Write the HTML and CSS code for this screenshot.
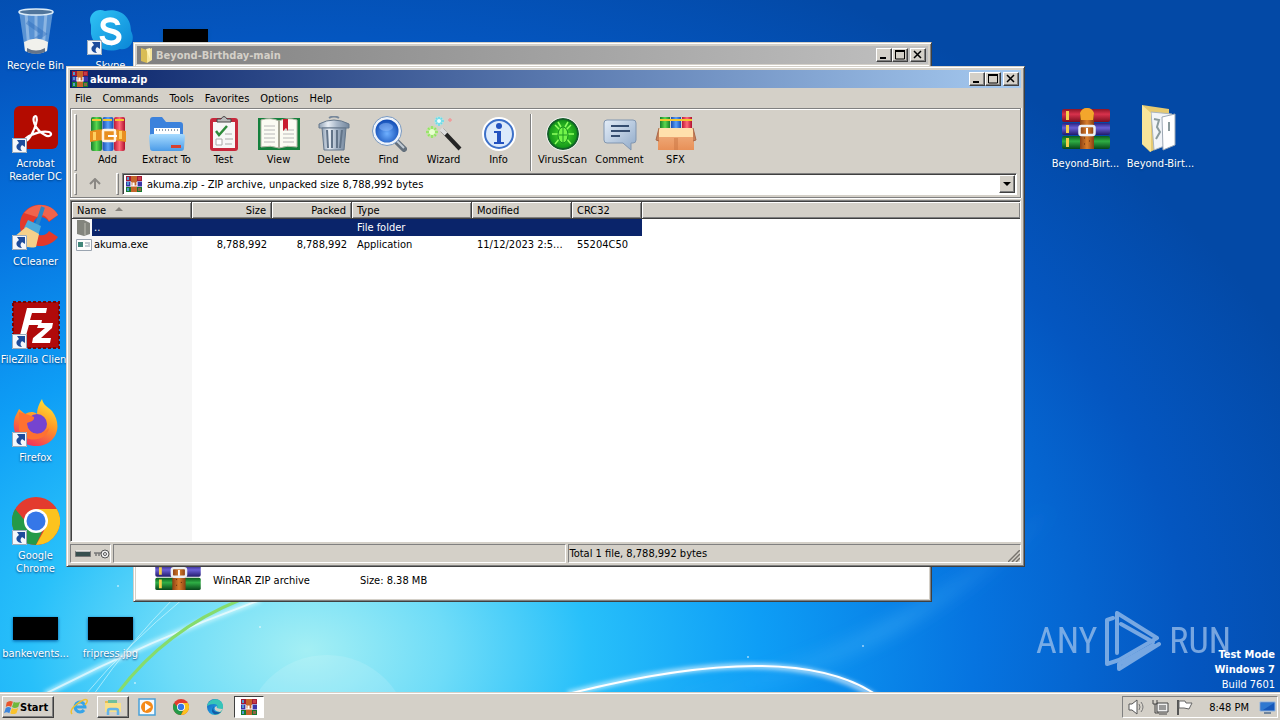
FILE: index.html
```html
<!DOCTYPE html>
<html lang="en">
<head>
<meta charset="utf-8">
<title>akuma.zip</title>
<link rel="stylesheet" href="styles.css">
</head>
<body>
<svg class="sprite" aria-hidden="true">
  <defs>
    <linearGradient id="gRed" x2="0" y2="1"><stop stop-color="#8d1527"/><stop offset=".4" stop-color="#d8324c"/><stop offset="1" stop-color="#7b0f20"/></linearGradient>
    <linearGradient id="gPurple" x2="0" y2="1"><stop stop-color="#2b2380"/><stop offset=".4" stop-color="#6a5fd6"/><stop offset="1" stop-color="#221b6c"/></linearGradient>
    <linearGradient id="gGreen" x2="0" y2="1"><stop stop-color="#0b5a1c"/><stop offset=".4" stop-color="#2fae45"/><stop offset="1" stop-color="#07461a"/></linearGradient>
    <linearGradient id="gStrap"><stop stop-color="#8a3f12"/><stop offset=".5" stop-color="#d97f2c"/><stop offset="1" stop-color="#8a3f12"/></linearGradient>
    <linearGradient id="vGreen"><stop stop-color="#17802a"/><stop offset=".5" stop-color="#5ad84f"/><stop offset="1" stop-color="#17802a"/></linearGradient>
    <linearGradient id="vBlue"><stop stop-color="#1a4fb4"/><stop offset=".5" stop-color="#5aa0f8"/><stop offset="1" stop-color="#1a4fb4"/></linearGradient>
    <linearGradient id="vRed"><stop stop-color="#c01838"/><stop offset=".5" stop-color="#ff6a78"/><stop offset="1" stop-color="#b01030"/></linearGradient>
    <linearGradient id="folderBlue" x2="0" y2="1"><stop stop-color="#a9dcff"/><stop offset="1" stop-color="#4a9be8"/></linearGradient>
    <linearGradient id="bin"><stop stop-color="#8fa0b4"/><stop offset=".3" stop-color="#e8eef5"/><stop offset=".6" stop-color="#a7b6c8"/><stop offset="1" stop-color="#74879d"/></linearGradient>
    <radialGradient id="lens" cx=".5" cy=".6"><stop stop-color="#6fb0ff"/><stop offset="1" stop-color="#1550b8"/></radialGradient>
    <radialGradient id="virus"><stop stop-color="#4be22c"/><stop offset="1" stop-color="#0f8f18"/></radialGradient>
    <linearGradient id="skype" x2="1" y2="1"><stop stop-color="#2fc4f5"/><stop offset="1" stop-color="#0a84d6"/></linearGradient>
    <linearGradient id="fox" x1=".8" y1="0" x2=".3" y2="1"><stop stop-color="#ffe838"/><stop offset=".45" stop-color="#ff9a26"/><stop offset="1" stop-color="#f02a60"/></linearGradient>
    <linearGradient id="edge" x2="1" y2="1"><stop stop-color="#1b57b8"/><stop offset=".6" stop-color="#1c9de0"/><stop offset="1" stop-color="#40c878"/></linearGradient>
    <linearGradient id="box" x2="0" y2="1"><stop stop-color="#f0b080"/><stop offset="1" stop-color="#e89058"/></linearGradient>
    <linearGradient id="bubble" x2="1" y2="1"><stop stop-color="#e4edf8"/><stop offset="1" stop-color="#8fa9c8"/></linearGradient>
  </defs>
  <symbol id="rar" viewBox="0 0 48 42">
    <rect y="1" width="48" height="13" rx="2" fill="url(#gRed)"/><rect y="15" width="48" height="12" rx="2" fill="url(#gPurple)"/><rect y="28" width="48" height="13" rx="2" fill="url(#gGreen)"/>
    <path d="M4 3h3v9H4zM4 17h3v8H4zM4 30h3v9H4z" fill="#f3d04a"/>
    <path d="M18 8q0-8 7-8t7 8v33H18z" fill="url(#gStrap)"/>
    <path d="M18 5q2-5 7-5t7 5l-1 7H19z" fill="#f3a62c"/>
    <rect x="17.500" y="18" width="15" height="9" rx="2" fill="none" stroke="#eceff2" stroke-width="2.500"/><path d="M25 20v6" stroke="#fff" stroke-width="2"/>
    <path d="M22 30h1M27 33h1M22 36h1" stroke="#5b270a"/>
  </symbol>
  <symbol id="rarsmall" viewBox="0 0 16 16">
    <path d="M0 0h16v5H0z" fill="#a31a35"/><path d="M0 5.500h16v5H0z" fill="#3b34a6"/><path d="M0 11h16v5H0z" fill="#167a2d"/>
    <path d="M1 1h2v3H1zM1 6h2v3H1zM1 12h2v3H1z" fill="#4f9ad0"/><path d="M5 0h6v16H5z" fill="#c4642a"/><path d="M5 6v4h2V7h1v3h3V6" fill="none" stroke="#fff" stroke-width="1.200"/><path d="M12 1h3v3h-3zM12 12h3v3h-3z" fill="#e05555" fill-opacity=".6"/>
  </symbol>
  <symbol id="arrow" viewBox="0 0 15 15"><path d="M0 0h15v15H0z" fill="#f4f7fb"/><path d="M.5 .5h14v14H.5z" fill="none" stroke="#9ab"/><path d="M5 2h8v7l-3-2c-2 2-2 4 0 6-5 0-8-5-3-8z" fill="#1d4c9c"/></symbol>
  <symbol id="chrome" viewBox="0 0 48 48"><circle cx="24" cy="24" r="24" fill="#e33b2e"/><path d="M3.200 12A24 24 0 0 0 24 48l9-20-19-3z" fill="#249a48"/><path d="M24 12h20.800A24 24 0 0 1 24 48l10-18z" fill="#fcc31e"/><circle cx="24" cy="24" r="12" fill="#fff"/><circle cx="24" cy="24" r="9.500" fill="#3577e8"/></symbol>
  <symbol id="folder" viewBox="0 0 16 16"><path d="M2 1l6 2v13l-6-2z" fill="#d9bd55"/><path d="M8 3l5-2v12l-5 3z" fill="#f7e69a"/><path d="M7 2l4-1v11" fill="#fff4b8"/></symbol>
</svg>

<main class="desktop">
  <svg class="wallpaper" viewBox="0 0 1280 692" preserveAspectRatio="none" aria-hidden="true">
    <defs>
      <filter id="soft" x="-20%" y="-20%" width="140%" height="140%"><feGaussianBlur stdDeviation="2"/></filter>
      <filter id="wide" x="-30%" y="-30%" width="160%" height="160%"><feGaussianBlur stdDeviation="8"/></filter>
      <linearGradient id="beam" gradientUnits="userSpaceOnUse" x1="700" y1="690" x2="1060" y2="520"><stop stop-color="#65c8ff" stop-opacity=".05"/><stop offset=".5" stop-color="#65c8ff" stop-opacity=".3"/><stop offset="1" stop-color="#65c8ff" stop-opacity="0"/></linearGradient>
    </defs>
    <path d="M680 700Q900 660 1060 500" fill="none" stroke="url(#beam)" stroke-width="14" filter="url(#wide)"/>
    <circle cx="327" cy="738" r="83" fill="#fff" fill-opacity=".12"/>
    <path d="M45 694Q150 640 260 600" fill="none" stroke="#e8ffff" stroke-opacity=".7" stroke-width="5" filter="url(#soft)"/>
    <path d="M45 694Q150 640 260 600" fill="none" stroke="#fff" stroke-opacity=".6" stroke-width="2"/>
    <path d="M86 694Q127 645 184 598M94 694Q130 642 174 598" fill="none" stroke="#dffcff" stroke-opacity=".6"/>
    <path d="M117 694Q165 630 240 600" fill="none" stroke="#86dc6c" stroke-width="3"/>
    <path d="M568 694Q790 635 880 700" fill="none" stroke="#fff" stroke-opacity=".6" stroke-width="6" filter="url(#soft)"/>
    <path d="M568 694Q790 638 875 694" fill="none" stroke="#fff" stroke-width="2"/>
    <g fill="#fff" fill-opacity=".6"><circle cx="135" cy="683" r="1"/><circle cx="118" cy="586" r="1"/><circle cx="748" cy="657" r="1"/><circle cx="863" cy="646" r="1"/><circle cx="260" cy="627" r="1"/></g>
  </svg>

  <div class="icons">
    <figure class="item c1 r1"><svg viewBox="0 0 48 48"><path d="M7 4l6 40q11 6 22 0l6-40z" fill="#9fc6ea" fill-opacity=".55"/><path d="M14 6l3 37M24 7v38M34 6l-3 37" stroke="#eaf6ff" stroke-opacity=".35" stroke-width="3"/><path d="M15 15l17 12-14 9" fill="none" stroke="#2a6ab8" stroke-opacity=".4" stroke-width="4"/><path d="M12 35q12-7 24 0l-1 9q-11 5-22 0z" fill="#f1f1ec"/><path d="M15 41q9 5 18 0v4q-9 4-18 0z" fill="#64748a"/><ellipse cx="24" cy="5" rx="17" ry="3" fill="#50759b" stroke="#dcecf8" stroke-width="1.500"/></svg><figcaption>Recycle Bin</figcaption></figure>
    <figure class="item c2 r1"><svg viewBox="0 0 48 48"><path d="M4 18C0 8 9 0 18 4c12-3 26 3 26 20 5 9-1 20-11 18C20 47 6 40 4 27z" fill="url(#skype)"/><path d="M31 18c-1-7-15-7-15 0 0 8 16 4 16 12 0 8-16 8-17-1" fill="none" stroke="#fff" stroke-width="5"/><use href="#arrow" y="33" width="15" height="15"/></svg><figcaption>Skype</figcaption></figure>
    <figure class="item thumb c3 r1"><span></span></figure>
    <figure class="item c1 r2"><svg viewBox="0 0 48 48"><rect x="2" y="1" width="44" height="43" rx="6" fill="#b30b00"/><path d="M13 36c-3-3 14-11 24-9 5 2 0 6-4 3-8-4-13-13-11-18 2-3 4 1 2 7-2 7-7 17-11 17z" fill="none" stroke="#fff" stroke-width="2.200"/><use href="#arrow" y="33" width="15" height="15"/></svg><figcaption>Acrobat<br>Reader DC</figcaption></figure>
    <figure class="item c1 r3"><svg viewBox="0 0 48 48"><path d="M46 12C36-5 8 0 8 22c0 22 26 28 38 12l-9-6c-5 8-16 4-16-5 0-10 11-12 16-4z" fill="#e3392a"/><path d="M12 10C22-2 40 0 46 12l-9 6c-3-6-8-7-12-4z" fill="#f0644c"/><path d="M31 4l-6 18" stroke="#2b86c6" stroke-width="4"/><path d="M16 17l13 6-3 10-14-8z" fill="#4aa9dc"/><path d="M14 24l13 7-3 13q-12 3-22-10z" fill="#f5d08a"/><use href="#arrow" y="32" width="15" height="15"/></svg><figcaption>CCleaner</figcaption></figure>
    <figure class="item c1 r4"><svg viewBox="0 0 48 48"><path d="M1 1h46v46H1z" fill="#b00a0a" stroke="#730505" stroke-width="2" stroke-dasharray="3 2"/><path d="M15 7h20l-1 5H20l-2 7h12l-1 5H17l-4 14H7zM27 22h14l-1 5-11 10h10l-1 5H20l1-5 12-10h-8z" fill="#fff"/><use href="#arrow" y="33" width="15" height="15"/></svg><figcaption class="nowrap">FileZilla Client</figcaption></figure>
    <figure class="item c1 r5"><svg viewBox="0 0 48 48"><path d="M30 0c1 6 6 8 10 12 12 16 3 35-16 35C8 47-2 33 3 18l4-8 6 5c4-2 8-3 12 0 0-6 2-10 5-15z" fill="url(#fox)"/><circle cx="25" cy="25" r="10" fill="#7544d0"/><path d="M7 13c7 2 10 3 15 5 1 4-5 5-7 6 0 11 13 15 22 5-2 14-25 16-30 2" fill="#ff7130"/><use href="#arrow" y="33" width="15" height="15"/></svg><figcaption>Firefox</figcaption></figure>
    <figure class="item c1 r6"><svg viewBox="0 0 48 48"><use href="#chrome" width="48" height="48"/><use href="#arrow" y="33" width="15" height="15"/></svg><figcaption>Google<br>Chrome</figcaption></figure>
    <figure class="item thumb c1 r7"><span></span><figcaption>bankevents...</figcaption></figure>
    <figure class="item thumb c2 r7"><span></span><figcaption>fripress.jpg</figcaption></figure>
    <figure class="item c15 r2"><svg viewBox="0 0 48 48"><use href="#rar" y="3" width="48" height="42"/></svg><figcaption>Beyond-Birt...</figcaption></figure>
    <figure class="item c16 r2"><svg viewBox="0 0 48 48"><path d="M5 0l27 4v34l-19 9-8-8z" fill="#e6ca70"/><path d="M14 7l21 2v29l-18 7z" fill="#f2f5f8" stroke="#aab4bd"/><path d="M25 12l13-3v31l-12 5z" fill="#fff" stroke="#9da8b4"/><path d="M17 14l5 1-2 7 3 5-4 7M32 17v9" fill="none" stroke="#8a9a9c" stroke-width="2"/><path d="M5 0l9 8v39l-9-8z" fill="#f8e59a"/></svg><figcaption>Beyond-Birt...</figcaption></figure>
  </div>

  <div class="brand" aria-label="ANY RUN"><span>ANY</span><svg viewBox="0 0 56 62"><g fill="none" stroke="currentColor" stroke-width="4" stroke-linejoin="round" stroke-linecap="round"><path d="M8 8L2 10v44l12-4 38-22L12 3v40"/><path d="M16 14l32 18M48 35L14 54v5l40-25"/></g></svg><span>RUN</span></div>
  <div class="build"><b>Test Mode</b><b>Windows 7</b><span>Build 7601</span></div>

  <section class="window back">
    <header class="titlebar idle"><svg viewBox="0 0 16 16"><use href="#folder"/></svg><h2>Beyond-Birthday-main</h2>
      <button aria-label="Minimize"><svg viewBox="0 0 12 10"><path d="M2 8h6" stroke="#000" stroke-width="2"/></svg></button><button aria-label="Maximize"><svg viewBox="0 0 12 10"><path d="M1.500 1v8h9V1M1 1h10" fill="none" stroke="#000"/><path d="M1 1h10" stroke="#000" stroke-width="2"/></svg></button><button class="close" aria-label="Close"><svg viewBox="0 0 12 10"><path d="M2 1l7 7M9 1L2 8" stroke="#000" stroke-width="1.500"/></svg></button></header>
    <div class="details"><svg viewBox="0 0 48 42"><use href="#rar"/></svg><p>WinRAR ZIP archive</p><p>Size: 8.38 MB</p></div>
  </section>

  <section class="window front">
    <header class="titlebar"><svg viewBox="0 0 16 16"><use href="#rarsmall"/></svg><h1>akuma.zip</h1>
      <button aria-label="Minimize"><svg viewBox="0 0 12 10"><path d="M2 8h6" stroke="#000" stroke-width="2"/></svg></button><button aria-label="Maximize"><svg viewBox="0 0 12 10"><path d="M1.500 1v8h9V1M1 1h10" fill="none" stroke="#000"/><path d="M1 1h10" stroke="#000" stroke-width="2"/></svg></button><button class="close" aria-label="Close"><svg viewBox="0 0 12 10"><path d="M2 1l7 7M9 1L2 8" stroke="#000" stroke-width="1.500"/></svg></button></header>
    <nav class="menu"><button>File</button><button>Commands</button><button>Tools</button><button>Favorites</button><button>Options</button><button>Help</button></nav>
    <div class="bars">
      <div class="toolbar"><i class="grip"></i>
        <button class="wide"><svg viewBox="0 0 36 36"><rect x="1" y="1" width="11" height="34" rx="2" fill="url(#vGreen)"/><rect x="12.500" y="1" width="11" height="34" rx="2" fill="url(#vBlue)"/><rect x="24" y="1" width="11" height="34" rx="2" fill="url(#vRed)"/><path d="M2 4h9M13 4h9M25 4h9" stroke="#f4c630" stroke-width="2"/><path d="M0 15q18-4 36 0v11q-18-4-36 0z" fill="#e88f20"/><path d="M3 16h3v8H3zM29 15h3v8h-3z" fill="#ffd060"/><rect x="13" y="14" width="12" height="11" rx="1" fill="none" stroke="#fff3e0" stroke-width="2.500"/><path d="M18 20h9" stroke="#fff" stroke-width="2"/></svg>Add</button>
        <button class="wide"><svg viewBox="0 0 36 36"><path d="M1 4q0-3 3-3h9l4 5h14q3 0 3 3v20H1z" fill="#3c82dc"/><path d="M5 12h26v9H5z" fill="#fff"/><path d="M7 14h22" stroke="#90a0b0" stroke-width="2" stroke-dasharray="1 2"/><path d="M0 20q0-2 3-2h30q3 0 3 2l-1 12q0 3-3 3H4q-3 0-3-3z" fill="url(#folderBlue)"/><path d="M22 29h10v3H22z" fill="#d84030"/></svg>Extract To</button>
        <button><svg viewBox="0 0 36 36"><rect x="4" y="2" width="28" height="33" rx="3" fill="#c8283c"/><path d="M7 6h22v26H7z" fill="#f7f7f7"/><path d="M11 6V3h4q3-5 6 0h4v3z" fill="#bbb" stroke="#444"/><path d="M10 15l3 4 8-9" fill="none" stroke="#2e8b3c" stroke-width="2.500"/><path d="M19 18h7M19 23h8M19 28h7" stroke="#aaa"/><path d="M10 23h6v6h-6z" fill="#fff" stroke="#aaa"/></svg>Test</button>
        <button><svg class="book" viewBox="0 0 42 36"><path d="M0 2h42v32H0z" fill="#14803c"/><path d="M3 4q10-3 18 1 8-4 18-1v27q-10-2-18 1-8-3-18-1z" fill="#fbfbf3" stroke="#b8b8a8"/><path d="M21 5v27" stroke="#a8a898" stroke-width="2"/><path d="M6 10h11M6 14h11M6 18h11M6 22h11M6 26h11M25 14h11M25 18h11M25 22h11M25 26h11" stroke="#b8b8b8"/><path d="M25 3h5v12l-2-3-3 3z" fill="#c81e30"/></svg>View</button>
        <button><svg viewBox="0 0 36 36"><path d="M13 2q5-3 10 0" fill="none" stroke="#77879a" stroke-width="2"/><path d="M3 8q15-8 30 0v4H3z" fill="url(#bin)" stroke="#66788c"/><path d="M6 12h24l-2 22H8z" fill="url(#bin)" stroke="#65778b"/><path d="M11 14l1 18M16 14v18M21 14v18M26 14l-2 18" stroke="#627489" stroke-width="2"/></svg>Delete</button>
        <button><svg viewBox="0 0 36 36"><path d="M24 24l9 9" stroke="#64707c" stroke-width="6" stroke-linecap="round"/><path d="M25 24l8 8" stroke="#c2ccd6" stroke-width="2"/><circle cx="16" cy="15" r="13" fill="url(#lens)" stroke="#eef3fa" stroke-width="3"/><circle cx="16" cy="15" r="14.500" fill="none" stroke="#7898c0"/><ellipse cx="15" cy="11" rx="7" ry="4" fill="#9cc4ff" fill-opacity=".45"/></svg>Find</button>
        <button><svg viewBox="0 0 36 36"><path d="M16 14l18 19" stroke="#252525" stroke-width="4"/><path d="M15 13l5 5" stroke="#ddd" stroke-width="4"/><circle cx="6" cy="16" r="6" fill="#b4ee80" fill-opacity=".5"/><circle cx="13" cy="5" r="5" fill="#a0eef0" fill-opacity=".5"/><g stroke-width="1.500"><path d="M6 10v12M0 16h12M2 12l8 8M10 12l-8 8" stroke="#8ae85a"/><path d="M13 1v9M9 5h9M10 2l6 6M16 2l-6 6" stroke="#64dcec"/><path d="M24 2v4M22 4h4" stroke="#f09a9a"/></g><circle cx="6" cy="16" r="3" fill="#e8ffd0"/><circle cx="13" cy="5" r="2" fill="#f0ffff"/></svg>Wizard</button>
        <button><svg viewBox="0 0 36 36"><circle cx="18" cy="18" r="16" fill="#edf3fb" stroke="#fff" stroke-width="2"/><circle cx="18" cy="18" r="14" fill="#dceafb" stroke="#3d70c8" stroke-width="2"/><circle cx="18" cy="10" r="3" fill="#2352c0"/><path d="M13 15h7v11h3v2H13v-2h3v-9h-3z" fill="#2352c0"/></svg>Info</button>
        <i class="sep"></i>
        <button class="mid"><svg viewBox="0 0 36 36"><circle cx="18" cy="18" r="15" fill="url(#virus)" stroke="#14602a" stroke-width="2"/><circle cx="18" cy="18" r="16.500" fill="none" stroke="#eee"/><path d="M10 9l5 5M26 9l-5 5M7 18h22M10 28l5-6M26 28l-5-6M13 6l3 5M23 6l-3 5" stroke="#8fff60" stroke-width="1.500"/><ellipse cx="18" cy="19" rx="5" ry="8" fill="#74f44a" stroke="#118a1d"/><path d="M18 12v15M14 19h8" stroke="#1d9a20"/></svg>VirusScan</button>
        <button class="mid"><svg viewBox="0 0 36 36"><path d="M5 4h26q3 0 3 3v17q0 3-3 3h-2v7l-8-7H5q-3 0-3-3V7q0-3 3-3z" fill="url(#bubble)" stroke="#8196b0"/><path d="M9 10h18M9 15h19M9 20h9" stroke="#354d70" stroke-width="2"/></svg>Comment</button>
        <button><svg class="book" viewBox="0 0 40 36"><path d="M4 1h10v15H4z" fill="url(#vGreen)"/><path d="M15 1h10v15H15z" fill="url(#vBlue)"/><path d="M26 1h10v15H26z" fill="url(#vRed)"/><path d="M4 4h32" stroke="#f4c630" stroke-width="2"/><path d="M2 15h36v19H2z" fill="url(#box)"/><path d="M3 12h34l1 9H3z" fill="#ffe0ac"/><path d="M3 12l-3 12 3 1M37 12l3 12-3 1" fill="#c88058" stroke="#aa6848"/><path d="M20 22v12" stroke="#c97544" stroke-width="4" stroke-opacity=".5"/></svg>SFX</button>
      </div>
      <div class="address"><i class="grip"></i><button class="up" aria-label="Up one level"><svg viewBox="0 0 12 12"><path d="M6 11V2M1 6l5-5 5 5" fill="none" stroke="#8a8783" stroke-width="2"/></svg></button><i class="grip"></i>
        <div class="combo"><svg viewBox="0 0 16 16"><use href="#rarsmall"/></svg><select aria-label="Archive path"><option>akuma.zip - ZIP archive, unpacked size 8,788,992 bytes</option></select><span class="drop"></span></div></div>
    </div>
    <div class="list">
      <table>
        <colgroup><col class="w120"><col class="w80"><col class="w80"><col class="w120"><col class="w100"><col class="w70"><col></colgroup>
        <thead><tr><th>Name <svg class="sort" viewBox="0 0 8 4"><path d="M0 4l4-4 4 4z" fill="#85827d"/></svg></th><th class="num">Size</th><th class="num">Packed</th><th>Type</th><th>Modified</th><th>CRC32</th><th class="rest"></th></tr></thead>
        <tbody>
          <tr class="selected"><td class="name"><svg viewBox="0 0 16 16"><path d="M0 0h16v16H0z" fill="#f6f6f6"/><path d="M1 0h7l6 3v11l-6 2-7-2z" fill="#83857d"/><path d="M9 3v12" stroke="#a0a198" stroke-width="2"/></svg><span>..</span></td><td></td><td></td><td>File folder</td><td></td><td></td><td class="rest"></td></tr>
          <tr><td class="name"><svg viewBox="0 0 16 16"><path d="M.5 2.500h15v11H.5z" fill="#fdfdfd" stroke="#9aa4b0"/><path d="M2 5h5v5H2z" fill="#41877a"/><path d="M9 6h3M9 9h3M13 5v5" stroke="#8797a5"/></svg><span>akuma.exe</span></td><td class="num">8,788,992</td><td class="num">8,788,992</td><td>Application</td><td>11/12/2023 2:5...</td><td>55204C50</td><td class="rest"></td></tr>
        </tbody>
      </table>
    </div>
    <footer class="status"><div class="lights"><svg viewBox="0 0 16 8"><path d="M.5 1.500h15v5H.5z" fill="#385050" stroke="#777"/><path d="M1 1h14" stroke="#fff"/></svg><svg class="key" viewBox="0 0 16 10"><path d="M0 4h8M2 4v3M5 4v3" stroke="#777" stroke-width="1.500"/><circle cx="11" cy="5" r="4" fill="#eee" stroke="#555"/><circle cx="11" cy="5" r="1.500" fill="#fff" stroke="#555"/></svg></div><div class="cell"></div><div class="cell total">Total 1 file, 8,788,992 bytes<svg viewBox="0 0 12 12"><path d="M0 12L12 0M4 12l8-8M8 12l4-4" stroke="#77736d" stroke-width="1.500"/></svg></div></footer>
  </section>
</main>

<footer class="taskbar">
  <button class="start"><svg viewBox="0 0 18 18"><path d="M3 4q3-3 7-1L8 9Q5 7 2 9z" fill="#e8552c"/><path d="M11 3q3 2 7 0l-2 6q-4 2-7 0z" fill="#6fb83c"/><path d="M2 10q3-2 6 0l-2 6q-3-2-6 0z" fill="#3c86dc"/><path d="M9 10q3 2 7 0l-2 6q-4 2-7 0z" fill="#f8c22c"/></svg>Start</button>
  <button class="task" aria-label="Internet Explorer"><svg viewBox="0 0 18 18"><path d="M14 12a5 5 0 1 1 1-3H5" fill="none" stroke="#36a4e8" stroke-width="3"/><path d="M2 16Q-1 12 7 6T17 2q1 2-2 5" fill="none" stroke="#f0c02c" stroke-width="1.500"/></svg></button>
  <button class="task open" aria-label="Explorer"><svg viewBox="0 0 18 18"><path d="M1 3h6l1 2h9v9H1z" fill="#e8bd50"/><path d="M4 2h9v5H4z" fill="#70c09a"/><path d="M1 5h16v9H1z" fill="#f8e08a"/><path d="M4 17v-4q0-2 2-2h6q2 0 2 2v4" fill="none" stroke="#64b4e8" stroke-width="2.500"/></svg></button>
  <button class="task" aria-label="Media Player"><svg viewBox="0 0 18 18"><path d="M1 1h16v16H1z" fill="#f5fbff" stroke="#48a0d8" stroke-width="1.500"/><circle cx="9" cy="9" r="6" fill="#f58a18"/><path d="M7 5l6 4-6 4z" fill="#fff"/></svg></button>
  <button class="task" aria-label="Chrome"><svg viewBox="0 0 18 18"><use href="#chrome" x="1" y="1" width="16" height="16"/></svg></button>
  <button class="task" aria-label="Edge"><svg viewBox="0 0 18 18"><circle cx="9" cy="9" r="8" fill="url(#edge)"/><path d="M1 8C3-1 16-1 17 8q0 4-6 3 2-5-3-5-4 0-7 2z" fill="#37c5b8"/><path d="M8 8q-3 7 7 6-3 3-7 2-4-3 0-8z" fill="#155ca8"/><path d="M11 8q-2 3 6 3l-3 3q-7-1-5-5z" fill="#d4d0c8"/></svg></button>
  <button class="task active" aria-label="WinRAR"><svg viewBox="0 0 16 16"><use href="#rarsmall"/></svg></button>
  <div class="tray">
    <svg viewBox="0 0 18 16"><path d="M1 5h3l5-4v14l-5-4H1z" fill="#fff" stroke="#555"/><path d="M11 5q2 3 0 6M13 3q4 5 0 10" fill="none" stroke="#777"/></svg>
    <svg viewBox="0 0 18 16"><path d="M5 4h11v9H5z" fill="#eee" stroke="#444"/><path d="M7 6h7v5H7z" fill="#999"/><path d="M7 15h8M1 1v4h4V1M3 5v9h4" fill="none" stroke="#444"/></svg>
    <svg viewBox="0 0 18 16"><path d="M2 1v15" stroke="#555" stroke-width="2"/><path d="M3 2h6l1 2h6l-3 6-5-1H3z" fill="#fff" stroke="#666"/></svg>
    <time>8:48 PM</time>
    <svg viewBox="0 0 18 16"><path d="M1 3h15v9H1z" fill="#1658ba" stroke="#8fb4e0"/><path d="M2 4h13L4 11H2z" fill="#2f78d0"/><path d="M5 14h7" stroke="#71859c" stroke-width="2"/></svg>
  </div>
</footer>
</body>
</html>
```
FILE: styles.css
```css
* { box-sizing: border-box; }
html, body { height: 100%; margin: 0; }
body { display: flex; flex-direction: column; overflow: hidden; font: 11px/13px "DejaVu Sans Condensed", "DejaVu Sans", sans-serif; color: #000; }
button, select { font: inherit; color: inherit; margin: 0; padding: 0; border: 0; background: none; }
h1, h2, p, figure { margin: 0; font: inherit; }
svg { display: block; flex: none; }
.sprite { position: absolute; width: 0; height: 0; }

.desktop {
  position: relative; flex: 1; min-height: 0; overflow: hidden;
  background: radial-gradient(ellipse 84% 108% at 24% 94%, #a4eff4 0%, #6edcf8 13%, #28c0fa 26%, #0e9ef6 42%, #0674e0 62%, #0456c0 82%, #0349a6 100%);
}
.wallpaper { position: absolute; inset: 0; width: 100%; height: 100%; }

.icons { position: relative; display: grid; grid-template-columns: repeat(16, 75px); grid-auto-rows: 98px; margin-left: -2px; color: #fff; text-shadow: 0 1px 2px #003a78; }
.item { display: flex; flex-direction: column; align-items: center; padding-top: 7px; text-align: center; }
.item svg { width: 48px; height: 48px; margin-bottom: 4px; }
.item .nowrap { white-space: nowrap; }
.thumb { padding-top: 29px; }
.thumb span { width: 45px; height: 23px; margin-bottom: 7px; background: #000; box-shadow: 0 1px 3px #0058a0; }
.c1 { grid-column: 1; } .c2 { grid-column: 2; } .c3 { grid-column: 3; } .c15 { grid-column: 15; } .c16 { grid-column: 16; }
.r1 { grid-row: 1; } .r2 { grid-row: 2; } .r3 { grid-row: 3; } .r4 { grid-row: 4; } .r5 { grid-row: 5; } .r6 { grid-row: 6; } .r7 { grid-row: 7; }

.brand { position: absolute; right: 49px; bottom: 20px; display: flex; align-items: center; gap: 8px; color: #a8c8ee; opacity: .7; font: 36px/36px "Roboto Condensed", "Liberation Sans Narrow", "Liberation Sans", sans-serif; }
.brand svg { width: 56px; height: 62px; }
.build { position: absolute; right: 5px; bottom: 0; display: grid; line-height: 15px; text-align: right; color: #fff; }

.window { position: absolute; display: flex; flex-direction: column; padding: 2px; background: #d4d0c8; border: 1px solid; border-color: #d4d0c8 #404040 #404040 #d4d0c8; box-shadow: inset 1px 1px #fff, inset -1px -1px #808080; }
.back { inset: 42px 348px 90px 133px; }
.front { inset: 66px 255px 125px 66px; padding: 3px; }
.titlebar { display: flex; align-items: center; height: 18px; padding: 0 2px; color: #fff; font-weight: bold; background: linear-gradient(90deg, #0a246a, #a6caf0); }
.back .titlebar { margin: 1px; }
.idle { color: #d4d0c8; background: linear-gradient(90deg, #808080, #c0c0c0); }
.titlebar > svg { width: 16px; height: 16px; }
.titlebar h1, .titlebar h2 { flex: 1; margin-left: 2px; }
.back h2 { margin-left: 1px; }
.titlebar button { width: 16px; height: 14px; padding: 1px; }
.titlebar button svg { width: 12px; height: 10px; }
.titlebar .close { margin-left: 2px; }
.titlebar button, .drop, .start, .open { background: #d4d0c8; border: 1px solid; border-color: #fff #404040 #404040 #fff; box-shadow: inset -1px -1px #808080; }
.details { flex: 1; display: flex; align-items: flex-end; padding: 0 0 8px 19px; background: #fff; }
.details svg { width: 46px; height: 40px; }
.details p { margin: 0 0 4px 12px; }
.details p + p { margin-left: 50px; }

.menu { display: flex; gap: 11px; height: 20px; padding-left: 5px; }
.bars { border: 1px solid #808080; box-shadow: inset 1px 1px #fff, 0 1px #fff, 1px 0 #fff; margin-bottom: 2px; padding: 1px; }
.toolbar { display: flex; height: 63px; padding: 4px 2px 2px; }
.toolbar button { width: 55px; display: flex; flex-direction: column; align-items: center; gap: 1px; padding-top: 2px; }
.toolbar .wide { width: 59px; }
.toolbar .mid { width: 57px; }
.toolbar svg { width: 36px; height: 36px; }
.toolbar .book { width: 42px; }
.grip { flex: none; width: 3px; border: 1px solid; border-color: #fff #808080 #808080 #fff; margin-right: 1px; }
.sep { width: 2px; border-left: 1px solid #808080; border-right: 1px solid #fff; margin: 0 2px 0 4px; }
.address { display: flex; height: 23px; padding: 0 2px 1px; }
.up { width: 34px; margin-right: 4px; display: grid; place-items: center; }
.up svg { width: 12px; height: 12px; }
.combo { flex: 1; display: flex; align-items: center; margin-left: 2px; padding: 1px; background: #fff; border: 1px solid; border-color: #808080 #fff #fff #808080; box-shadow: inset 1px 1px #404040; }
.combo svg { width: 16px; height: 16px; margin: 0 5px 0 2px; }
.combo select { flex: 1; min-width: 0; appearance: none; outline: 0; }
.drop { width: 16px; height: 18px; display: grid; place-items: center; }
.drop::before { content: ""; border: 4px solid transparent; border-top-color: #000; border-bottom: 0; }

.list { flex: 1; min-height: 0; overflow: hidden; border: 1px solid; border-color: #808080 #fff #fff #808080; box-shadow: inset 1px 1px #404040; padding: 1px 0 0 1px; background: linear-gradient(90deg, #f6f6f6 121px, #fff 121px); }
table { width: 100%; table-layout: fixed; border-collapse: separate; border-spacing: 0; }
.w70 { width: 70px; } .w80 { width: 80px; } .w100 { width: 100px; } .w120 { width: 120px; }
th, td { height: 17px; padding: 0 5px; font-weight: normal; text-align: left; white-space: nowrap; overflow: hidden; }
th { background: #d4d0c8; border-right: 1px solid #404040; border-bottom: 1px solid #404040; box-shadow: inset 1px 1px #fff, inset -1px -1px #808080; }
th.rest { border-right: 0; }
.num { text-align: right; }
.sort { display: inline-block; width: 8px; height: 4px; margin: 0 0 3px 6px; }
td.name { padding: 0 0 0 4px; display: flex; align-items: center; }
td svg { width: 16px; height: 16px; margin-right: 2px; }
.selected td { background: #0a246a; color: #fff; }
.selected .name { background: linear-gradient(90deg, #f6f6f6 20px, #0a246a 20px); }
.selected .name svg { margin: 0; }
.selected .name span { margin-left: 2px; }
.selected td.rest { background: none; }

.status { display: flex; gap: 2px; height: 21px; padding-top: 2px; }
.status > div { border: 1px solid; border-color: #808080 #fff #fff #808080; display: flex; align-items: center; }
.lights { width: 41px; gap: 3px; padding-left: 4px; }
.lights svg { width: 16px; height: 8px; }
.lights .key { height: 10px; }
.cell { flex: 1; }
.total { justify-content: space-between; padding-left: 1px; }
.total svg { width: 12px; height: 12px; align-self: flex-end; }

.taskbar { flex: none; display: flex; align-items: center; height: 28px; padding: 4px 2px 2px; background: #d4d0c8; box-shadow: inset 0 1px #d4d0c8, inset 0 2px #fff; }
.start { display: flex; align-items: center; height: 22px; width: 52px; padding-left: 1px; font-weight: bold; margin-right: 9px; }
.start svg { width: 16px; height: 18px; }
.task { width: 32px; height: 22px; margin-right: 2px; display: grid; place-items: center; }
.task svg { width: 18px; height: 18px; }
.active { width: 30px; margin-left: 1px; background: #fff; border: 1px solid; border-color: #404040 #fff #fff #404040; }
.active svg { width: 16px; height: 16px; }
.tray { margin-left: auto; display: flex; align-items: center; gap: 6px; height: 22px; padding: 0 0 0 5px; border: 1px solid; border-color: #808080 #fff #fff #808080; }
.tray svg { width: 18px; height: 16px; }
.tray time { margin: 0 4px 0 9px; }
```
